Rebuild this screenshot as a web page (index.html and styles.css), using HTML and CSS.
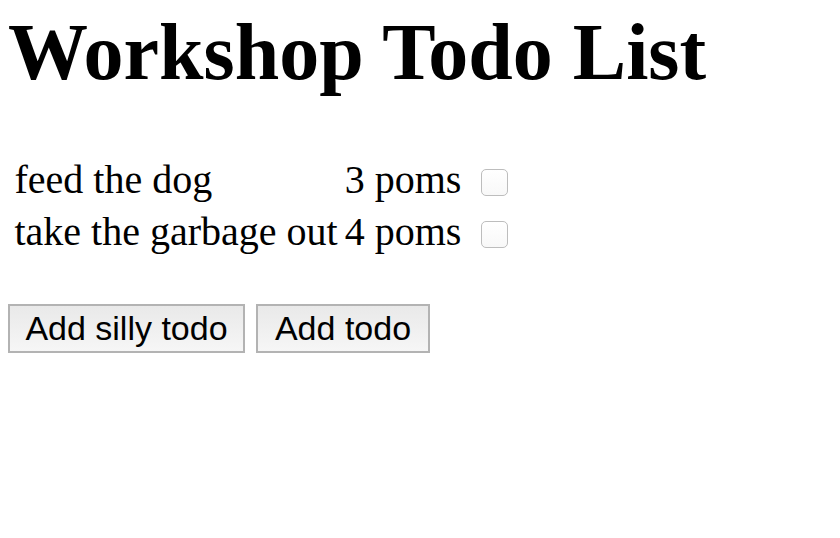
FILE: index.html
```html
<!DOCTYPE html>
<html>
<head>
<meta charset="utf-8">
<title>Workshop Todo List</title>
<link rel="stylesheet" href="styles.css">
</head>
<body>
<h1 class="title">Workshop Todo List</h1>
<div class="todos">
  <div class="todo">
    <span class="todo-name">feed the dog</span>
    <span class="todo-poms">3 poms</span>
    <input class="todo-check" type="checkbox">
  </div>
  <div class="todo">
    <span class="todo-name">take the garbage out</span>
    <span class="todo-poms">4 poms</span>
    <input class="todo-check" type="checkbox">
  </div>
</div>
<div class="actions">
  <button class="btn btn-silly" type="button">Add silly todo</button>
  <button class="btn btn-add" type="button">Add todo</button>
</div>
</body>
</html>
```
FILE: styles.css
```css
html, body {
  background: #ffffff;
}
body {
  margin: 8px;
  font-family: "Liberation Serif", "Times New Roman", serif;
  color: #000;
}
.title {
  margin: 0;
  font-size: 80px;
  line-height: 88px;
  font-weight: bold;
}
.todos {
  margin-top: 58px;
  padding-left: 6.5px;
  display: grid;
  grid-template-columns: max-content max-content max-content;
  column-gap: 7px;
  font-size: 40px;
  line-height: 52px;
}
.todo {
  display: contents;
}
.todo-check {
  appearance: none;
  -webkit-appearance: none;
  box-sizing: border-box;
  width: 27px;
  height: 27px;
  margin: 15px 0 0 13px;
  border: 1px solid #bdbdbd;
  border-radius: 5px;
  background: linear-gradient(#ffffff, #f8f8f8);
}
.actions {
  margin-top: 46px;
  display: flex;
  gap: 11px;
}
.btn {
  box-sizing: border-box;
  height: 49px;
  margin: 0;
  padding: 0;
  border: 2px solid #b3b3b3;
  border-radius: 0;
  background: linear-gradient(#e9e9e9, #f6f6f6);
  font-family: "Liberation Sans", Arial, Helvetica, sans-serif;
  font-size: 34px;
  color: #000;
  text-align: center;
}
.btn-silly {
  width: 237px;
}
.btn-add {
  width: 174px;
}
```
